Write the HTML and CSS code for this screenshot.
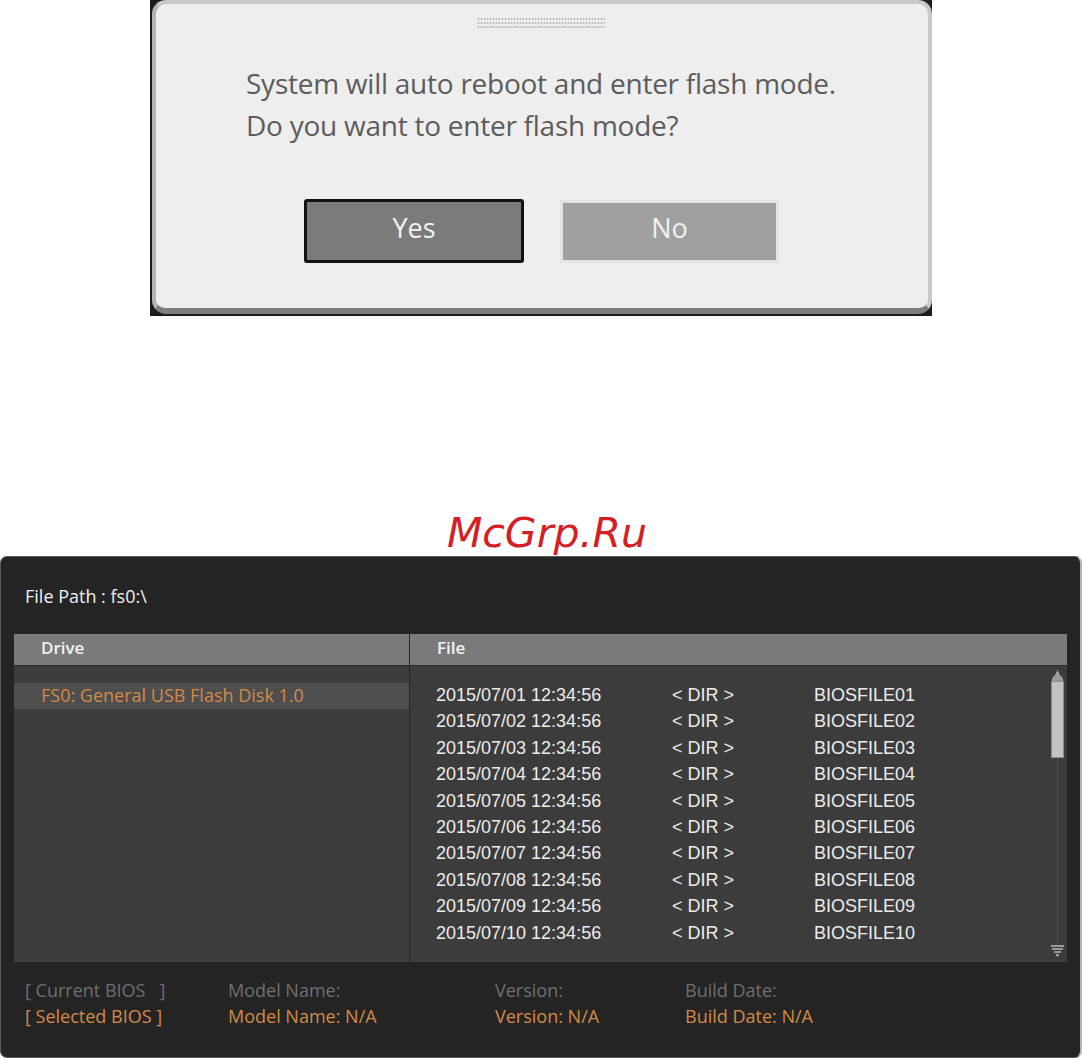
FILE: index.html
```html
<!DOCTYPE html>
<html>
<head>
<meta charset="utf-8">
<link rel="stylesheet" href="styles.css">
</head>
<body>
<div class="top">
  <div class="dialog-frame">
    <div class="dialog">
      <div class="handle"></div>
      <div class="message">
        <div>System will auto reboot and enter flash mode.</div>
        <div>Do you want to enter flash mode?</div>
      </div>
      <div class="buttons">
        <div class="btn btn-yes">Yes</div>
        <div class="btn btn-no">No</div>
      </div>
    </div>
  </div>
</div>
<div class="watermark">McGrp.Ru</div>
<div class="panel">
  <div class="filepath">File Path : fs0:\</div>
  <div class="table">
    <div class="col-drive">
      <div class="th">Drive</div>
      <div class="drive-body">
        <div class="drive-row selected">FS0: General USB Flash Disk 1.0</div>
      </div>
    </div>
    <div class="col-file">
      <div class="th">File</div>
      <div class="file-body">
        <div class="file-list">
          <div class="file-row"><span class="c-date">2015/07/01 12:34:56</span><span class="c-dir">&lt; DIR &gt;</span><span class="c-name">BIOSFILE01</span></div>
          <div class="file-row"><span class="c-date">2015/07/02 12:34:56</span><span class="c-dir">&lt; DIR &gt;</span><span class="c-name">BIOSFILE02</span></div>
          <div class="file-row"><span class="c-date">2015/07/03 12:34:56</span><span class="c-dir">&lt; DIR &gt;</span><span class="c-name">BIOSFILE03</span></div>
          <div class="file-row"><span class="c-date">2015/07/04 12:34:56</span><span class="c-dir">&lt; DIR &gt;</span><span class="c-name">BIOSFILE04</span></div>
          <div class="file-row"><span class="c-date">2015/07/05 12:34:56</span><span class="c-dir">&lt; DIR &gt;</span><span class="c-name">BIOSFILE05</span></div>
          <div class="file-row"><span class="c-date">2015/07/06 12:34:56</span><span class="c-dir">&lt; DIR &gt;</span><span class="c-name">BIOSFILE06</span></div>
          <div class="file-row"><span class="c-date">2015/07/07 12:34:56</span><span class="c-dir">&lt; DIR &gt;</span><span class="c-name">BIOSFILE07</span></div>
          <div class="file-row"><span class="c-date">2015/07/08 12:34:56</span><span class="c-dir">&lt; DIR &gt;</span><span class="c-name">BIOSFILE08</span></div>
          <div class="file-row"><span class="c-date">2015/07/09 12:34:56</span><span class="c-dir">&lt; DIR &gt;</span><span class="c-name">BIOSFILE09</span></div>
          <div class="file-row"><span class="c-date">2015/07/10 12:34:56</span><span class="c-dir">&lt; DIR &gt;</span><span class="c-name">BIOSFILE10</span></div>
        </div>
        <div class="scrollbar">
          <svg class="arrow" width="13" height="11" viewBox="0 0 13 11">
            <rect x="6" y="0" width="1" height="2" fill="#9a9a9a"/>
            <rect x="5" y="2" width="3" height="2" fill="#9a9a9a"/>
            <rect x="4" y="4" width="5" height="2" fill="#9a9a9a"/>
            <rect x="2" y="6" width="9" height="2" fill="#9a9a9a"/>
            <rect x="1" y="8" width="11" height="3" fill="#9a9a9a"/>
          </svg>
          <div class="thumb"></div>
          <div class="track"></div>
          <svg class="arrow" width="13" height="12" viewBox="0 0 13 12">
            <rect x="0" y="0" width="13" height="2" fill="#9a9a9a"/>
            <rect x="1" y="3" width="11" height="2" fill="#9a9a9a"/>
            <rect x="3" y="6" width="7" height="2" fill="#9a9a9a"/>
            <rect x="5" y="9" width="3" height="2" fill="#9a9a9a"/>
            <rect x="6" y="11" width="1" height="1" fill="#9a9a9a"/>
          </svg>
        </div>
      </div>
    </div>
  </div>
  <div class="footer">
    <div class="f-grey">[ Current BIOS &nbsp;&nbsp;]</div>
    <div class="f-grey">Model Name:</div>
    <div class="f-grey">Version:</div>
    <div class="f-grey">Build Date:</div>
    <div class="f-orange">[ Selected BIOS ]</div>
    <div class="f-orange">Model Name: N/A</div>
    <div class="f-orange">Version: N/A</div>
    <div class="f-orange">Build Date: N/A</div>
  </div>
</div>
</body>
</html>
```

FILE: styles.css
```css
html, body {
  margin: 0;
  padding: 0;
  background: #ffffff;
}
body {
  width: 1082px;
  height: 1060px;
  overflow: hidden;
  font-family: "Open Sans", "DejaVu Sans", sans-serif;
}

/* ---------- top dialog ---------- */
.top {
  height: 316px;
  padding-left: 150px;
}
.dialog-frame {
  width: 782px;
  height: 316px;
  background: #1c1c1c;
  box-sizing: border-box;
  padding: 0 0 2px 2px;
}
.dialog {
  height: 100%;
  box-sizing: border-box;
  background: #eeeeee;
  border-top: 4px solid #c9c9c9;
  border-left: 4px solid #b4b4b4;
  border-right: 4px solid #c9c9c9;
  border-bottom: 6px solid #7e7e7e;
  border-radius: 14px;
  display: flex;
  flex-direction: column;
  align-items: flex-start;
}
.handle {
  align-self: flex-start;
  margin: 13px 0 0 321px;
  width: 128px;
  height: 11px;
  background-image: radial-gradient(circle, #b9b9b9 0.9px, transparent 1.2px);
  background-size: 3px 4px;
}
.message {
  margin: 34px 0 0 90px;
  font-size: 28px;
  line-height: 42px;
  color: #5c5c5c;
  letter-spacing: -0.25px;
}
.buttons {
  display: flex;
  gap: 36px;
  margin: 53px 0 0 148px;
  align-items: flex-start;
}
.btn {
  box-sizing: border-box;
  display: flex;
  align-items: center;
  justify-content: center;
  font-size: 27px;
  color: #f2f2f2;
  padding-bottom: 8px;
}
.btn-yes {
  width: 220px;
  height: 64px;
  background: #7b7b7b;
  border: 3px solid #121212;
  border-radius: 3px;
}
.btn-no {
  margin-top: 1px;
  width: 219px;
  height: 63px;
  background: #a0a0a0;
  border: 3px solid #e3e3e3;
}

/* ---------- watermark ---------- */
.watermark {
  margin-top: 194px;
  height: 46px;
  text-align: center;
  padding-left: 12px;
  font-family: "DejaVu Sans", sans-serif;
  font-style: italic;
  font-size: 41px;
  line-height: 46px;
  color: #d42024;
}

/* ---------- bottom panel ---------- */
.panel {
  box-sizing: border-box;
  width: 1082px;
  height: 502px;
  background: #242424;
  border: 1px solid #5a5a5a;
  border-right: 2px solid #b4b4b4;
  border-radius: 7px;
  padding: 0 0 0 13px;
  display: flex;
  flex-direction: column;
}
.filepath {
  height: 77px;
  padding: 28px 0 0 11px;
  box-sizing: border-box;
  font-size: 18px;
  line-height: 22px;
  color: #f0f0f0;
}
.table {
  display: flex;
  height: 328px;
  width: 1053px;
}
.col-drive {
  width: 395px;
  border-right: 1px solid #262626;
  display: flex;
  flex-direction: column;
}
.col-file {
  flex: 1;
  display: flex;
  flex-direction: column;
}
.th {
  height: 32px;
  box-sizing: border-box;
  background: #7a7a7a;
  border-bottom: 1px solid #2c2c2c;
  padding: 3px 0 0 27px;
  font-size: 17px;
  font-weight: 600;
  line-height: 22px;
  color: #f3f3f3;
}
.drive-body {
  flex: 1;
  background: #3d3d3d;
  padding-top: 17px;
}
.drive-row {
  height: 26px;
  line-height: 24px;
  padding-left: 27px;
  font-size: 18px;
  color: #d38a45;
}
.drive-row.selected {
  background: #4e4e4e;
}
.file-body {
  flex: 1;
  background: #3c3c3c;
  display: flex;
}
.file-list {
  flex: 1;
  padding: 16px 0 0 26px;
  font-family: "Liberation Sans", Arial, sans-serif;
  font-size: 18px;
  color: #ececec;
}
.file-row {
  height: 26.4px;
  line-height: 26px;
  display: flex;
  white-space: nowrap;
}
.c-date {
  width: 236px;
}
.c-dir {
  width: 142px;
}
.scrollbar {
  width: 13px;
  margin-right: 3px;
  padding-top: 4px;
  display: flex;
  flex-direction: column;
  align-items: center;
}
.arrow {
  display: block;
  flex: none;
}
.thumb {
  width: 13px;
  height: 77px;
  box-sizing: border-box;
  background: #c2c2c2;
  border: 1px solid #8c8c8c;
  flex: none;
}
.track {
  width: 1px;
  height: 187px;
  background: #4a4a4a;
  flex: none;
}

/* ---------- footer ---------- */
.footer {
  display: grid;
  grid-template-columns: 203px 267px 190px auto;
  grid-auto-rows: 26px;
  padding: 15px 0 0 11px;
  font-size: 18px;
  line-height: 26px;
}
.f-grey {
  color: #6f6f6f;
}
.f-orange {
  color: #d38a45;
}
```
